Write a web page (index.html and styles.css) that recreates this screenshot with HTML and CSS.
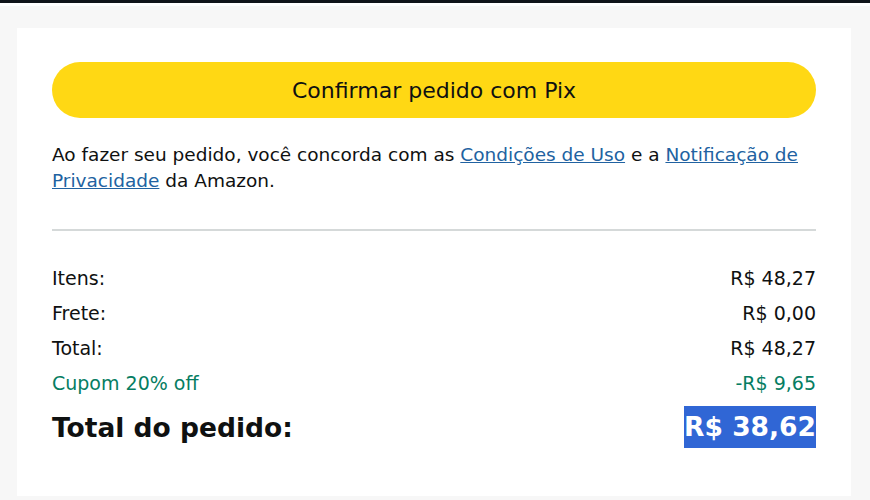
FILE: index.html
```html
<!DOCTYPE html>
<html lang="pt-BR">

<head>
    <meta charset="UTF-8">
    <meta name="viewport" content="width=device-width, initial-scale=1.0">
    <title>Resumo do pedido</title>
    <link rel="stylesheet" href="styles.css">
</head>

<body>
    <div class="top-bar"></div>

    <div class="page">
        <div class="summary-card">
            <button class="btn-confirm">Confirmar pedido com Pix</button>

            <p class="terms">
                Ao fazer seu pedido, você concorda com as <a href="#">Condições de Uso</a> e a
                <a href="#">Notificação de Privacidade</a> da Amazon.
            </p>

            <hr class="divider">

            <div class="rows">
                <div class="row">
                    <span>Itens:</span>
                    <span>R$ 48,27</span>
                </div>
                <div class="row">
                    <span>Frete:</span>
                    <span>R$ 0,00</span>
                </div>
                <div class="row">
                    <span>Total:</span>
                    <span>R$ 48,27</span>
                </div>
                <div class="row discount">
                    <span>Cupom 20% off</span>
                    <span>-R$ 9,65</span>
                </div>
            </div>

            <div class="row grand-total">
                <span>Total do pedido:</span>
                <span class="selected">R$ 38,62</span>
            </div>
        </div>
    </div>
</body>

</html>
```

FILE: styles.css
```css
body {
    font-family: 'DejaVu Sans', 'Noto Sans', sans-serif;
    background-color: #f7f7f7;
    color: #0f1111;
    margin: 0;
    padding: 0;
}

.top-bar {
    height: 3px;
    background-color: #0f1419;
    border-bottom: 3px solid #ffffff;
}

.page {
    padding: 22px 19px 5px 17px;
}

.summary-card {
    background: #fff;
    padding: 34px 35px 48px 35px;
}

.btn-confirm {
    display: block;
    width: 100%;
    height: 56px;
    border: none;
    border-radius: 28px;
    background-color: #ffd814;
    color: #0f1111;
    font-family: inherit;
    font-size: 22px;
    cursor: pointer;
}

.terms {
    font-size: 18.5px;
    line-height: 26px;
    margin: 24px 0 0 0;
}

.terms a {
    color: #2162a1;
    text-decoration: underline;
}

.divider {
    border: none;
    border-top: 2px solid #d5d9d9;
    margin: 35px 0 0 0;
}

.rows {
    margin-top: 29px;
}

.row {
    display: flex;
    justify-content: space-between;
    align-items: center;
    font-size: 19px;
    height: 35px;
}

.discount {
    color: #067d62;
}

.grand-total {
    margin-top: 6px;
    height: 42px;
    font-size: 26.5px;
    font-weight: bold;
}

.selected {
    display: inline-block;
    line-height: 42px;
    background-color: #3066d5;
    color: #fff;
    padding: 0;
}
```
